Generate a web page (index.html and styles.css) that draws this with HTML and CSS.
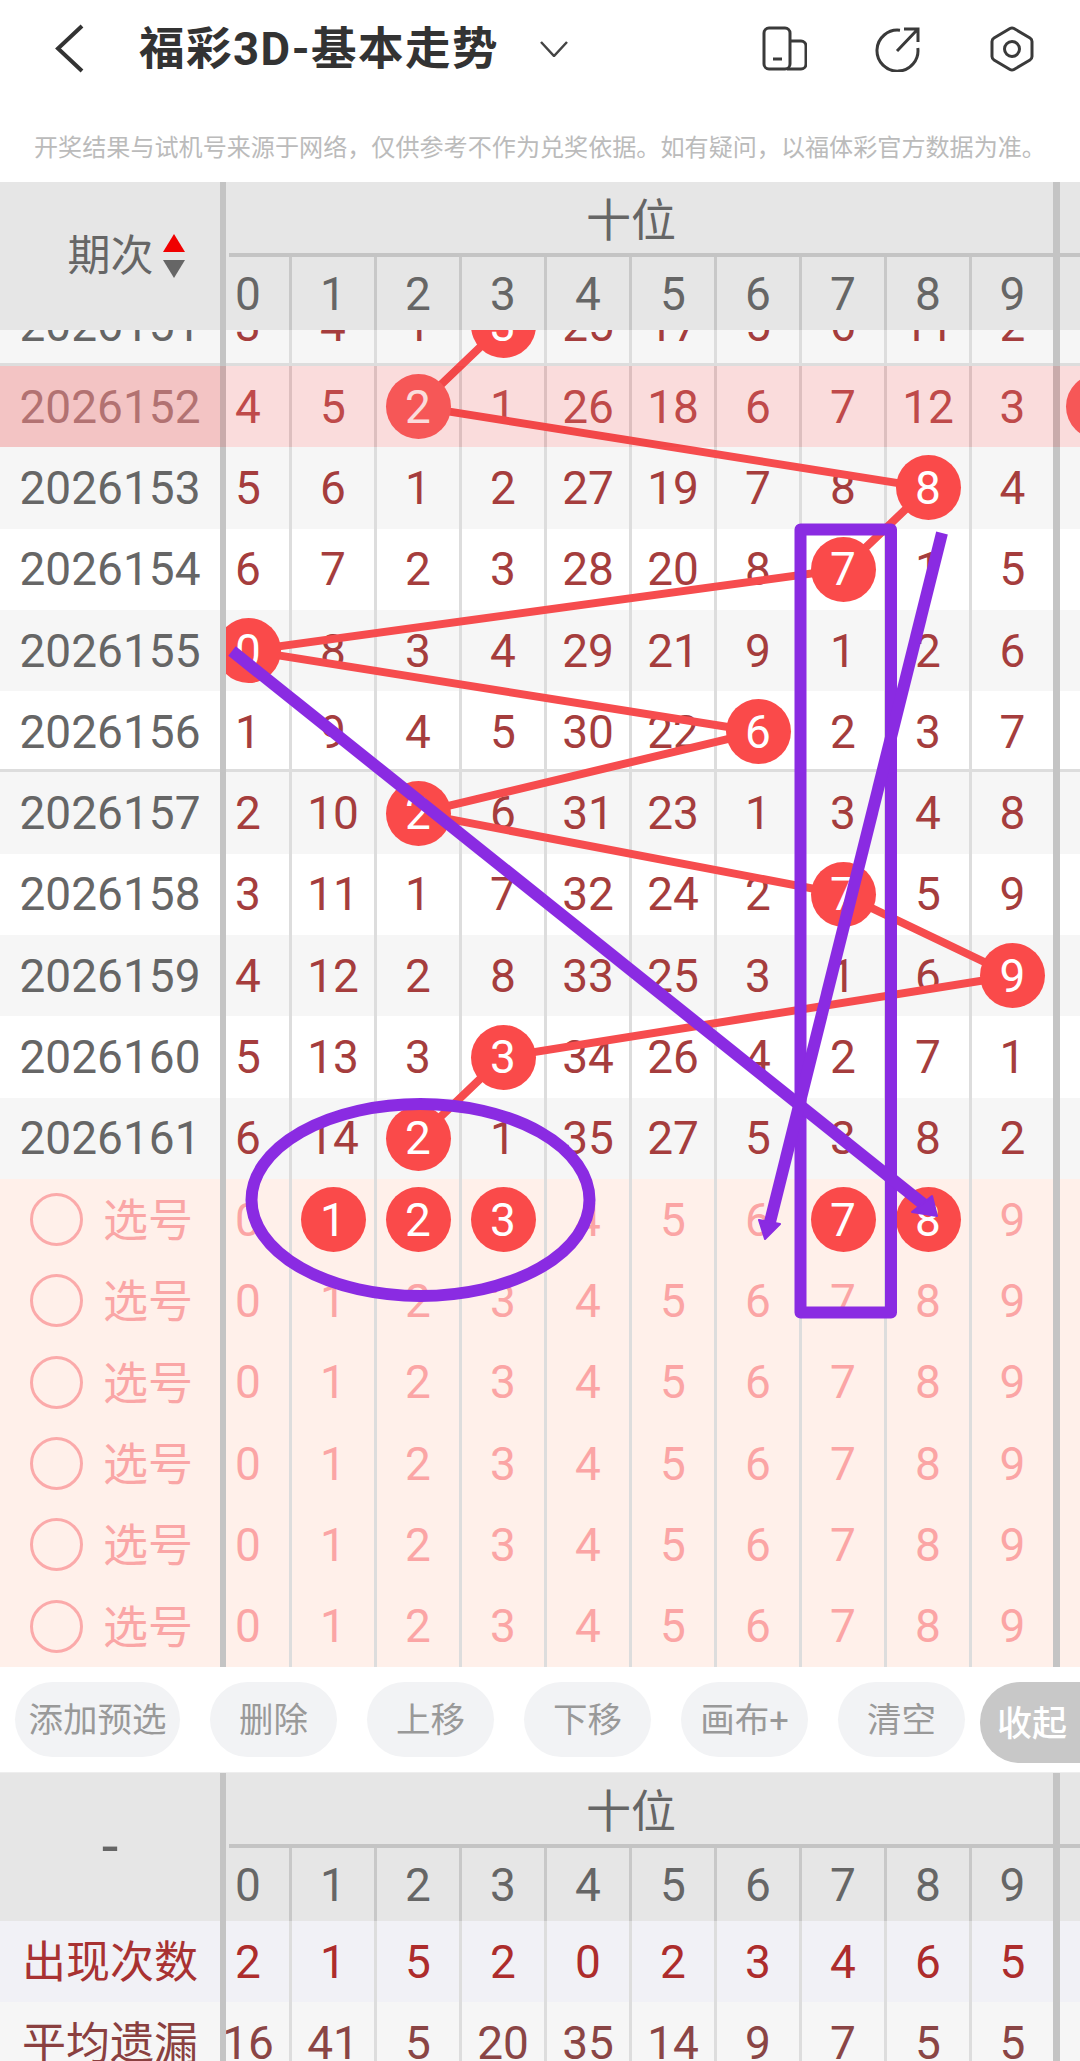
FILE: index.html
```html
<!DOCTYPE html>
<html lang="zh">
<head>
<meta charset="utf-8">
<title>福彩3D-基本走势</title>
<link rel="stylesheet" href="styles.css">
</head>
<body>
<div class="page">
  <header class="topbar">
    <svg class="back" viewBox="0 0 30 50" width="30" height="50"><path d="M27 2 3 24.500 27 47"/></svg>
    <h1 class="title">福彩3D-基本走势</h1>
    <svg class="caret" viewBox="0 0 28 16" width="28" height="16"><path d="M1 1 14 15 27 1"/></svg>
    <div class="tools">
      <svg class="tool" viewBox="0 0 46 46" width="46" height="46"><rect x="3" y="2" width="26" height="41" rx="5"/><path d="M29 15h11a5 5 0 0 1 5 5v18a5 5 0 0 1-5 5H26M12 33h9"/></svg>
      <svg class="tool" viewBox="0 0 46 46" width="46" height="46"><path d="M25 4.300A20.500 20.500 0 1 0 42.800 22M22 25 42 4M29 3h14v13"/></svg>
      <svg class="tool" viewBox="0 0 46 46" width="46" height="46"><path d="M21 2.500a4 4 0 0 1 4 0l16 9.500a4 4 0 0 1 2 3.400v15.200a4 4 0 0 1-2 3.400l-16 9.500a4 4 0 0 1-4 0L5 34a4 4 0 0 1-2-3.400V15.400a4 4 0 0 1 2-3.400Z"/><circle cx="23" cy="23" r="7.500"/></svg>
    </div>
  </header>
  <p class="notice">开奖结果与试机号来源于网络，仅供参考不作为兑奖依据。如有疑问，以福体彩官方数据为准。</p>

  <section class="head">
    <div class="corner">
      <span class="corner-label">期次</span>
      <svg class="sort" viewBox="0 0 22 44" width="22" height="44"><path class="sort-up" d="M11 0 22 18H0Z"/><path class="sort-down" d="M0 26h22L11 44Z"/></svg>
    </div>
    <div class="head-main">
      <div class="head-title"><span class="group-title">十位</span></div>
      <div class="cells head-digits"><span class="c">0</span><span class="c">1</span><span class="c">2</span><span class="c">3</span><span class="c">4</span><span class="c">5</span><span class="c">6</span><span class="c">7</span><span class="c">8</span><span class="c">9</span></div>
    </div>
  </section>

  <section class="chart">
    <svg class="trend" viewBox="0 330 1080 1338" width="1080" height="1338"><polyline points="503,325.300 418,406.600 928,487.900 843,569.200 248,650.500 758,731.800 418,813.100 843,894.400 1013,975.700 503,1057 418,1138.300"/></svg>

    <div class="row row--alt row--top"><div class="period">2026151</div><div class="cells"><span class="c">3</span><span class="c">4</span><span class="c">1</span><span class="c"><b class="ball">3</b></span><span class="c">25</span><span class="c">17</span><span class="c">5</span><span class="c">6</span><span class="c">11</span><span class="c">2</span></div></div>
    <div class="row row--hl"><div class="period">2026152</div><div class="cells"><span class="c">4</span><span class="c">5</span><span class="c"><b class="ball">2</b></span><span class="c">1</span><span class="c">26</span><span class="c">18</span><span class="c">6</span><span class="c">7</span><span class="c">12</span><span class="c">3</span><span class="next"><b class="ball">0</b></span></div></div>
    <div class="row row--alt"><div class="period">2026153</div><div class="cells"><span class="c">5</span><span class="c">6</span><span class="c">1</span><span class="c">2</span><span class="c">27</span><span class="c">19</span><span class="c">7</span><span class="c">8</span><span class="c"><b class="ball">8</b></span><span class="c">4</span></div></div>
    <div class="row"><div class="period">2026154</div><div class="cells"><span class="c">6</span><span class="c">7</span><span class="c">2</span><span class="c">3</span><span class="c">28</span><span class="c">20</span><span class="c">8</span><span class="c"><b class="ball">7</b></span><span class="c">1</span><span class="c">5</span></div></div>
    <div class="row row--alt"><div class="period">2026155</div><div class="cells"><span class="c"><b class="ball">0</b></span><span class="c">8</span><span class="c">3</span><span class="c">4</span><span class="c">29</span><span class="c">21</span><span class="c">9</span><span class="c">1</span><span class="c">2</span><span class="c">6</span></div></div>
    <div class="row row--sep"><div class="period">2026156</div><div class="cells"><span class="c">1</span><span class="c">9</span><span class="c">4</span><span class="c">5</span><span class="c">30</span><span class="c">22</span><span class="c"><b class="ball">6</b></span><span class="c">2</span><span class="c">3</span><span class="c">7</span></div></div>
    <div class="row row--alt"><div class="period">2026157</div><div class="cells"><span class="c">2</span><span class="c">10</span><span class="c"><b class="ball">2</b></span><span class="c">6</span><span class="c">31</span><span class="c">23</span><span class="c">1</span><span class="c">3</span><span class="c">4</span><span class="c">8</span></div></div>
    <div class="row"><div class="period">2026158</div><div class="cells"><span class="c">3</span><span class="c">11</span><span class="c">1</span><span class="c">7</span><span class="c">32</span><span class="c">24</span><span class="c">2</span><span class="c"><b class="ball">7</b></span><span class="c">5</span><span class="c">9</span></div></div>
    <div class="row row--alt"><div class="period">2026159</div><div class="cells"><span class="c">4</span><span class="c">12</span><span class="c">2</span><span class="c">8</span><span class="c">33</span><span class="c">25</span><span class="c">3</span><span class="c">1</span><span class="c">6</span><span class="c"><b class="ball">9</b></span></div></div>
    <div class="row"><div class="period">2026160</div><div class="cells"><span class="c">5</span><span class="c">13</span><span class="c">3</span><span class="c"><b class="ball">3</b></span><span class="c">34</span><span class="c">26</span><span class="c">4</span><span class="c">2</span><span class="c">7</span><span class="c">1</span></div></div>
    <div class="row row--alt"><div class="period">2026161</div><div class="cells"><span class="c">6</span><span class="c">14</span><span class="c"><b class="ball">2</b></span><span class="c">1</span><span class="c">35</span><span class="c">27</span><span class="c">5</span><span class="c">3</span><span class="c">8</span><span class="c">2</span></div></div>

    <div class="row row--pick"><div class="period"><i class="radio"></i>选号</div><div class="cells"><span class="c">0</span><span class="c"><b class="ball">1</b></span><span class="c"><b class="ball">2</b></span><span class="c"><b class="ball">3</b></span><span class="c">4</span><span class="c">5</span><span class="c">6</span><span class="c"><b class="ball">7</b></span><span class="c"><b class="ball">8</b></span><span class="c">9</span></div></div>
    <div class="row row--pick"><div class="period"><i class="radio"></i>选号</div><div class="cells"><span class="c">0</span><span class="c">1</span><span class="c">2</span><span class="c">3</span><span class="c">4</span><span class="c">5</span><span class="c">6</span><span class="c">7</span><span class="c">8</span><span class="c">9</span></div></div>
    <div class="row row--pick"><div class="period"><i class="radio"></i>选号</div><div class="cells"><span class="c">0</span><span class="c">1</span><span class="c">2</span><span class="c">3</span><span class="c">4</span><span class="c">5</span><span class="c">6</span><span class="c">7</span><span class="c">8</span><span class="c">9</span></div></div>
    <div class="row row--pick"><div class="period"><i class="radio"></i>选号</div><div class="cells"><span class="c">0</span><span class="c">1</span><span class="c">2</span><span class="c">3</span><span class="c">4</span><span class="c">5</span><span class="c">6</span><span class="c">7</span><span class="c">8</span><span class="c">9</span></div></div>
    <div class="row row--pick"><div class="period"><i class="radio"></i>选号</div><div class="cells"><span class="c">0</span><span class="c">1</span><span class="c">2</span><span class="c">3</span><span class="c">4</span><span class="c">5</span><span class="c">6</span><span class="c">7</span><span class="c">8</span><span class="c">9</span></div></div>
    <div class="row row--pick"><div class="period"><i class="radio"></i>选号</div><div class="cells"><span class="c">0</span><span class="c">1</span><span class="c">2</span><span class="c">3</span><span class="c">4</span><span class="c">5</span><span class="c">6</span><span class="c">7</span><span class="c">8</span><span class="c">9</span></div></div>

    <svg class="marks" viewBox="0 330 1080 1338" width="1080" height="1338">
      <ellipse cx="420.500" cy="1200" rx="169" ry="96"/>
      <rect x="800.500" y="529.500" width="90.500" height="783"/>
      <path d="M232 651 927 1207"/>
      <path d="M942 533 769 1226"/>
      <path class="tip" d="M937 1216 912 1212 932 1196Z"/>
      <path class="tip" d="M765 1239 759 1220 780 1224Z"/>
    </svg>
  </section>

  <nav class="actions">
    <button class="btn btn--wide">添加预选</button>
    <button class="btn">删除</button>
    <button class="btn">上移</button>
    <button class="btn">下移</button>
    <button class="btn">画布+</button>
    <button class="btn">清空</button>
    <button class="btn btn--fold">收起</button>
  </nav>

  <section class="head">
    <div class="corner"><span class="corner-dash">-</span></div>
    <div class="head-main">
      <div class="head-title"><span class="group-title">十位</span></div>
      <div class="cells head-digits"><span class="c">0</span><span class="c">1</span><span class="c">2</span><span class="c">3</span><span class="c">4</span><span class="c">5</span><span class="c">6</span><span class="c">7</span><span class="c">8</span><span class="c">9</span></div>
    </div>
  </section>
  <div class="row row--count"><div class="period">出现次数</div><div class="cells"><span class="c">2</span><span class="c">1</span><span class="c">5</span><span class="c">2</span><span class="c">0</span><span class="c">2</span><span class="c">3</span><span class="c">4</span><span class="c">6</span><span class="c">5</span></div></div>
  <div class="row row--miss"><div class="period">平均遗漏</div><div class="cells"><span class="c">16</span><span class="c">41</span><span class="c">5</span><span class="c">20</span><span class="c">35</span><span class="c">14</span><span class="c">9</span><span class="c">7</span><span class="c">5</span><span class="c">5</span></div></div>
</div>
</body>
</html>
```
FILE: styles.css
```css
* { box-sizing: border-box; }
html, body { margin: 0; padding: 0; background: #fff; }
body { font-family: Roboto, "Noto Sans CJK SC", sans-serif; }
.page { width: 1080px; height: 2061px; overflow: hidden; }

/* top bar */
.topbar { height: 98px; display: flex; align-items: center; padding-left: 55px; }
.back { fill: none; stroke: #333; stroke-width: 4; margin-right: 54px; }
.title { margin: 0; padding-top: 2px; font-size: 45.500px; font-weight: 700; color: #333; line-height: 60px; letter-spacing: 1.500px; white-space: nowrap; }
.caret { fill: none; stroke: #444; stroke-width: 2.500; margin-left: 41px; }
.tools { margin-left: auto; margin-right: 45px; display: flex; gap: 68px; }
.tool { fill: none; stroke: #3a3a3a; stroke-width: 3; }
.notice { margin: 0; height: 84px; padding: 11px 0 0 34px; display: flex; align-items: center; font-size: 24.100px; color: #bbb; white-space: nowrap; }

/* table head */
.head { display: flex; height: 148px; background: #e6e6e6; overflow: hidden; }
.corner { position: relative; z-index: 2; flex: none; width: 226px; background: #e6e6e6; border-right: 6px solid #c4c4c4; display: flex; align-items: center; justify-content: center; gap: 9px; padding-left: 32px; color: #666; }
.corner-label { font-size: 43px; line-height: 50px; }
.corner-dash { font-size: 60px; line-height: 60px; margin-left: -32px; }
.sort-up { fill: #f00000; }
.sort-down { fill: #666; }
.head-main { flex: 1; min-width: 0; }
.head-title { height: 75px; margin-left: 3px; border-bottom: 4px solid #c4c4c4; }
.group-title { display: flex; align-items: center; justify-content: center; width: 824px; height: 71px; padding-right: 20px; font-size: 45px; color: #666; box-shadow: 7px 0 0 #c4c4c4; }
.head-digits { height: 73px; color: #666; }
.head-digits .c { border-right-color: #c8c8c8; }

/* rows */
.chart { position: relative; height: 1338px; overflow: hidden; }
.row { position: relative; display: flex; height: 81.300px; background: #fff; color: #a53d3d; }
.row--top { height: 36px; align-items: flex-end; overflow: hidden; box-shadow: inset 0 -3px #ddd; }
.row--alt { background: #f6f6f6; }
.row--sep { box-shadow: inset 0 -3px #ddd; }
.period { position: relative; z-index: 4; flex: none; width: 226px; height: 81.300px; border-right: 6px solid #c4c4c4; background: inherit; box-shadow: inherit; display: flex; align-items: center; justify-content: center; font-size: 46px; color: #666; }
.cells { display: flex; flex: none; margin-left: -19px; font-size: 46px; }
.c { flex: none; width: 85px; height: 81.300px; border-right: 3px solid #ddd; display: flex; align-items: center; justify-content: center; }
.c:nth-child(10) { width: 88px; border-right: 7px solid #c4c4c4; }
.head-digits .c { height: 73px; }
.next { flex: none; width: 76px; display: flex; align-items: center; justify-content: center; }
.ball { position: relative; z-index: 2; flex: none; width: 65px; height: 65px; border-radius: 50%; background: #fa4a4a; color: #fff; font-weight: 400; display: flex; align-items: center; justify-content: center; }

/* highlighted row */
.row--hl { color: #b85050; }
.row--hl .period { background: #f7e2e2; color: #a98080; }
.row--hl::after { content: ""; position: absolute; inset: 0; z-index: 5; background: rgba(225, 50, 50, .17); pointer-events: none; }
.row--hl .ball { background: #fb5f5f; }

/* pick rows */
.row--pick { background: #fff0ea; color: #fba5a5; }
.row--pick .period { justify-content: flex-start; padding: 0 0 4px 30px; gap: 20px; font-size: 45px; color: #faa6a6; }
.radio { flex: none; width: 53px; height: 53px; margin-top: 4px; border: 3.500px solid #fbaaaa; border-radius: 50%; }

/* drawn overlays */
.trend { position: absolute; top: 0; left: 0; z-index: 1; fill: none; stroke: #f64c4e; stroke-width: 8; }
.marks { position: absolute; top: 0; left: 0; z-index: 6; fill: none; stroke: #8a2be2; stroke-width: 12; stroke-linejoin: round; }
.marks .tip { fill: #8a2be2; stroke-width: 2; }

/* action bar */
.actions { height: 105px; padding: 14px 0 0 15px; display: flex; align-items: flex-start; gap: 30px; background: #fff; overflow: hidden; border-bottom: 1px solid #eee; }
.btn { flex: none; width: 127px; height: 75px; padding: 0 0 6px; border: 0; border-radius: 38px; background: #f2f3f5; color: #999; font: 400 34.500px Roboto, "Noto Sans CJK SC", sans-serif; }
.btn--wide { width: 165px; }
.btn--fold { width: 130px; height: 81px; margin-left: -15px; border-radius: 40px 0 0 40px; background: #c8c8c8; color: #fff; font-weight: 500; font-size: 35px; text-align: left; padding: 0 0 4px 17px; }

/* stats rows */
.row--count { background: #f1f1f6; color: #ad2c2c; }
.row--count .period, .row--miss .period { padding-bottom: 5px; font-size: 44px; font-weight: 400; }
.row--count .period { color: #a83232; }
.row--miss { background: #f6f6f6; color: #8a4545; }
.row--miss .period { color: #8a4040; }
```
